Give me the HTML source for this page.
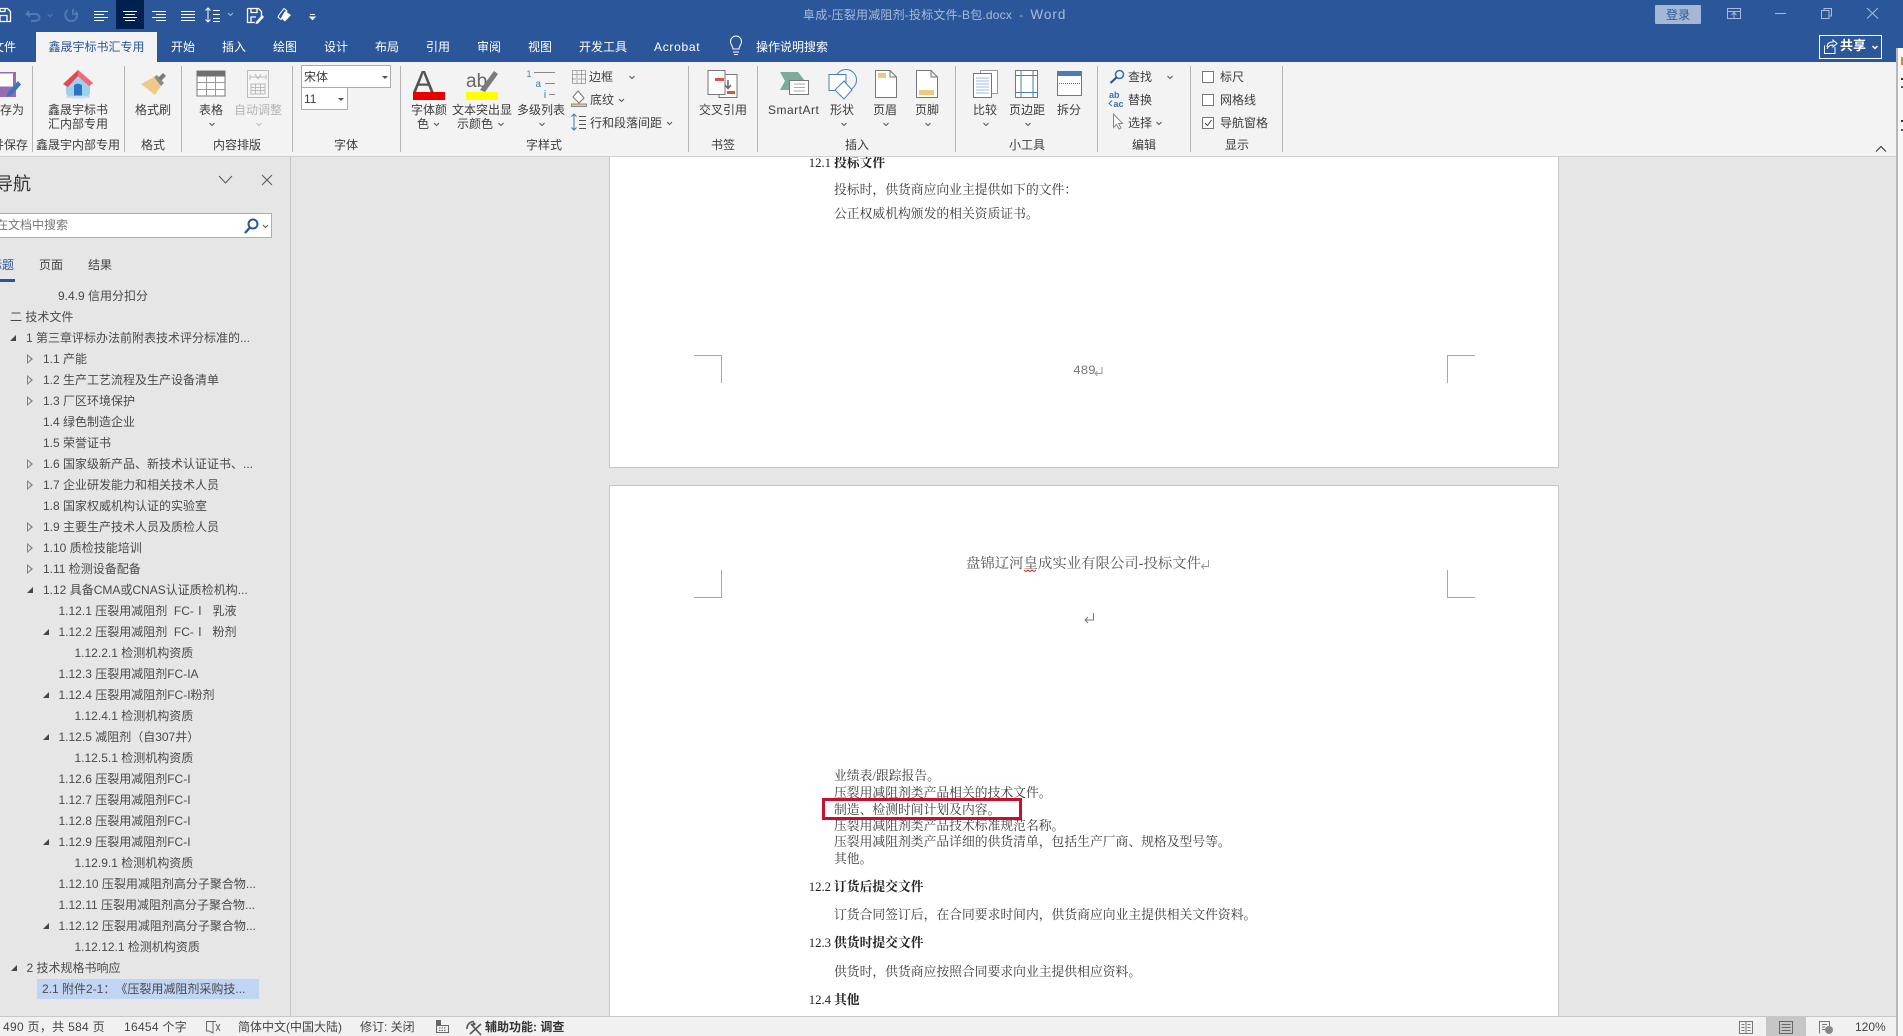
<!DOCTYPE html>
<html lang="zh-CN">
<head>
<meta charset="utf-8">
<title>阜成-压裂用减阻剂-投标文件-B包.docx - Word</title>
<style>
html,body{margin:0;padding:0;background:#fff}
#app{position:relative;width:1903px;height:1036px;overflow:hidden;background:#f8f8f8;font-family:"Liberation Sans","Noto Sans CJK SC",sans-serif;font-size:12px;color:#444;text-spacing-trim:space-all}
.b{position:absolute}
.t{position:absolute;white-space:nowrap;line-height:16px;height:16px}
.w{color:#fff}
.c{text-align:center}
.s{position:absolute;top:66px;height:86px;width:1px;background:#b4b4b4}
.dk{color:#3d3d3d}
#navlist{position:absolute;left:0;top:286px;width:289px}
.i{position:relative;height:21px;line-height:21px;white-space:nowrap;color:#4a4a4a}
.e::before{content:"";position:absolute;margin-left:-16px;top:7px;border-style:solid;border-width:0 0 6px 6px;border-color:transparent transparent #454545 transparent}
.r::before{content:"";position:absolute;margin-left:-16px;top:5px;width:6px;height:10px;background:#808080;clip-path:polygon(evenodd,0 0,100% 50%,0 100%,0 0,1px 2px,1px 8px,4px 5px,1px 2px)}
.d{position:absolute;white-space:nowrap;font-family:"Liberation Serif","Noto Serif CJK SC",serif;font-size:12.8px;line-height:16px;height:16px;color:#3a3a3a}
.h{font-weight:700;color:#222}
.h span{display:inline-block;width:25.3px;font-weight:400}
</style>
</head>
<body>
<div id="app">
<!-- window backgrounds -->
<div class="b" style="left:0;top:0;width:1903px;height:48px;background:#2b579a"></div>
<div class="b" style="left:0;top:48px;width:1897px;height:14px;background:#2b579a"></div>
<div class="b" style="left:0;top:62px;width:1896px;height:94px;background:#f3f3f3"></div>
<div class="b" style="left:0;top:156px;width:1896px;height:860px;background:#e6e6e6"></div>
<div class="b" style="left:0;top:156px;width:1896px;height:1px;background:#cfcfcf"></div>
<div class="b" style="left:1896px;top:48px;width:2px;height:988px;background:#b8b8b8"></div>
<div class="b" style="left:290px;top:157px;width:1px;height:859px;background:#c6c6c6"></div>
<div class="b" style="left:0;top:1016px;width:1896px;height:20px;background:#f1f1f1;border-top:1px solid #c8c8c8;box-sizing:border-box"></div>
<div class="b" style="left:1766px;top:1017px;width:40px;height:19px;background:#c6c6c6"></div>
<!-- behind-window slivers -->
<div class="b" style="left:1901px;top:57px;width:2px;height:8px;background:#c98a3c"></div>
<div class="b" style="left:1901px;top:78px;width:2px;height:2px;background:#333"></div>
<div class="b" style="left:1901px;top:86px;width:2px;height:2px;background:#555"></div>
<div class="b" style="left:1901px;top:120px;width:2px;height:2px;background:#333"></div>
<div class="b" style="left:1901px;top:129px;width:2px;height:2px;background:#555"></div>
<!-- Quick access highlight and active tab -->
<div class="b" style="left:116px;top:0;width:28px;height:29px;background:#002050"></div>
<div class="b" style="left:36px;top:32px;width:121px;height:30px;background:#f3f3f3"></div>
<!-- pages -->
<div class="b" style="left:609px;top:157px;width:950px;height:311px;background:#fff;border:1px solid #c6c6c6;border-top:0;box-sizing:border-box"></div>
<div class="b" style="left:609px;top:485px;width:950px;height:531px;background:#fff;border:1px solid #c6c6c6;border-bottom:0;box-sizing:border-box"></div>
<!-- separators -->
<div class="s" style="left:32px"></div><div class="s" style="left:124px"></div><div class="s" style="left:181px"></div><div class="s" style="left:292px"></div><div class="s" style="left:400px"></div><div class="s" style="left:688px"></div><div class="s" style="left:757px"></div><div class="s" style="left:955px"></div><div class="s" style="left:1097px"></div><div class="s" style="left:1190px"></div><div class="s" style="left:1282px"></div>

<svg class="b" style="left:0;top:0" width="1903" height="1036" viewBox="0 0 1903 1036" fill="none">
<!-- QAT -->
<g stroke="#fff" stroke-width="1.3">
<path d="M-5 8.5H7.5L10.5 11.5V21.5H-5zM0 21.5V15.5H7V21.5M0 8.5V11.5H5V8.5"/>
<path d="M94 11.5H108M94 14.5H104M94 17.5H108M94 20.5H104" stroke-width="1"/>
<path d="M123 11.5H137M125 14.5H135M123 17.5H137M125 20.5H135" stroke-width="1"/>
<path d="M152 11.5H166M156 14.5H166M152 17.5H166M156 20.5H166" stroke-width="1"/>
<path d="M181 11.5H195M181 14.5H195M181 17.5H195M181 20.5H195" stroke-width="1"/>
<path d="M208 8V22M205.5 10.5L208 8L210.5 10.5M205.5 19.5L208 22L210.5 19.5M213 10.5H220M213 14.5H220M213 18.5H220M213 21.5H220" stroke-width="1"/>
<path d="M247.5 8.5H258.5L261.5 11.5V17M247.5 8.5V22.5H255M251 8.5V12.5H257V8.5M251 22.5V17H256"/>
</g>
<path d="M256 22L262 15L264 17L258 23.5L255.5 24Z" fill="#fff"/>
<path d="M279 15L284 8.5L287 11L281 19.5L278 17Z" stroke="#fff"/>
<path d="M285 11L291 15L285 21.500L281 18Z" fill="#fff"/>
<path d="M310 14.5H315M310 17L312.5 19.5L315 17Z" stroke="#fff" fill="#fff" stroke-width="1"/>
<path d="M228 13l2.5 2.5 2.5-2.5" stroke="#a8bcd8"/>
<g stroke="#537ab3" stroke-width="2">
<path d="M29 11L26.5 14L30 16.5M27 14H35C41 14 41 21 35 21H31"/>
<path d="M68 10A6 6 0 1 0 76 11.5M73 9V14H78" stroke-width="1.8"/>
</g>
<path d="M47.5 14l2.5 2.5 2.5-2.5" stroke="#537ab3"/>
<!-- lightbulb -->
<path d="M733 52H739M734 54.5H738M733 49C733 46 730.5 45 730.5 41.500A5.5 5.5 0 0 1 741.5 41.500C741.5 45 739 46 739 49Z" stroke="#fff"/>
<!-- window controls -->
<g stroke="#a8bcd8">
<path d="M1727.5 8.5H1740.5V18.5H1727.5ZM1727.5 11.5H1740.5M1734 18V13M1731.5 15L1734 12.5L1736.5 15"/>
<path d="M1775 13.5H1786"/>
<path d="M1821.5 10.5H1829V18.5H1821.5ZM1824 10V8.5H1831.5V16H1829.5"/>
<path d="M1867 8L1878 18.5M1878 8L1867 18.5"/>
</g>
<!-- share -->
<rect x="1819.5" y="35.5" width="62" height="23" stroke="#fff"/>
<path d="M1824.5 45.5V53.5H1835V47M1827 47C1827 43 1830 42 1833 42V40L1837 43.5L1833 47V45C1830 45 1828 46 1827 49" stroke="#fff"/>
<path d="M1872.5 46l2.5 2.5 2.5-2.5" stroke="#fff" stroke-width="1.5"/>

<!-- save as -->
<rect x="-8" y="72" width="24" height="25" fill="#9a6bb5"/><rect x="-5" y="73.5" width="18" height="13" fill="#fff"/>
<path d="M18 81L8 92L6.5 97L11.5 95.5L21 84.5Z" fill="#3b78b5"/>
<!-- home icon -->
<path d="M67 87H89V97H67Z" fill="#a9d8ee"/><path d="M66 85V94C70 98 86 98 90 94V85L78 74Z" fill="#9fd1ea"/>
<path d="M74 96V86C74 83 82 83 82 86V96Z" fill="#2f74c0"/>
<path d="M63 84L78 70L93 83L89 86L78 76L68 87Z" fill="#e8454f"/><path d="M78 70L93 83L89 86L78 76Z" fill="#f26a70"/>
<ellipse cx="78" cy="97" rx="12" ry="1.5" fill="#c8dfe9"/>
<!-- brush -->
<path d="M141 84L154 77L161 86L155 95Z" fill="#efc987"/>
<path d="M154 77L157 75L164 83L161 86Z" fill="#8b8b8b"/>
<path d="M158 78L163 73L166 76L161 81Z" fill="#7a7a7a"/>
<!-- table -->
<rect x="197" y="71" width="28" height="25" fill="#fff" stroke="#7a7a7a"/><rect x="197" y="71" width="28" height="5.5" fill="#6f6f6f"/>
<path d="M197 82.5H225M197 89.5H225M206.5 76V96M215.5 76V96" stroke="#9a9a9a"/>
<!-- autofit -->
<rect x="247.5" y="70.5" width="21" height="27" fill="#f6f6f6" stroke="#bbb"/>
<path d="M250 77H266M255 74L258 79M261 74L258 79M250 74.5V79.5M266 74.5V79.5" stroke="#bbb"/>
<rect x="251" y="84" width="14" height="10" stroke="#bbb" fill="#f6f6f6"/><path d="M251 87.5H265M251 90.5H265M255.5 84V94M260.5 84V94" stroke="#bbb"/>
<!-- dropdown arrows -->
<path d="M381 75h5l-2.5 2.5z M337 99h5l-2.5 2.5z" fill="#555"/>
<!-- font colour -->
<text x="413" y="92" font-family="Liberation Sans" font-size="31" fill="#555">A</text>
<rect x="413" y="92" width="32" height="8" fill="#e60000"/>
<!-- highlight -->
<text x="466" y="87" font-family="Liberation Sans" font-size="19" fill="#666">ab</text>
<path d="M480 90L494 71L498 74L485 92Z" fill="#7b7b7b"/>
<rect x="466" y="92" width="32" height="8" fill="#ffff00"/>
<!-- multilevel -->
<text x="526.5" y="77" font-family="Liberation Sans" font-size="9" fill="#4a7ebb">1</text>
<path d="M534 72.5H555" stroke="#888"/>
<text x="535.5" y="87" font-family="Liberation Sans" font-size="10" fill="#4a7ebb">a</text>
<path d="M545 83.5H555" stroke="#888"/>
<path d="M545 92V98M545 90V91" stroke="#4a7ebb"/><path d="M549 94.5H555" stroke="#888"/>
<!-- borders -->
<path d="M572.5 70.5H585.5V83.5H572.5ZM572.5 74.5H585.5M572.5 79H585.5M577 70.5V83.5M581.5 70.5V83.5" stroke="#666" stroke-dasharray="1 1"/>
<!-- shading -->
<path d="M578 91L584 98L579 103L573 97Z" stroke="#777" fill="#fff"/><path d="M572 104.5H586V107H572Z" fill="#efc987"/><rect x="571.5" y="104" width="15" height="2.5" stroke="#888"/>
<!-- line spacing -->
<path d="M574 114V130M571.5 116.5L574 114L576.5 116.5M571.5 127.5L574 130L576.5 127.5" stroke="#3b78b5"/><path d="M579 116.5H586M579 120.5H586M579 124.5H586M579 128.5H586" stroke="#555"/>
<!-- cross-ref -->
<rect x="719" y="74.5" width="18" height="23" fill="#fff" stroke="#777"/>
<rect x="708" y="70.5" width="17" height="24" fill="#fff" stroke="#777"/>
<rect x="715" y="78" width="9" height="3" fill="#d9573a"/><rect x="727" y="91" width="8" height="3" fill="#d9573a"/>
<path d="M728 80V89M725 85L728 88.5L731 85" stroke="#666" stroke-width="1.5"/>
<!-- SmartArt -->
<path d="M780 72H798L805 81L798 90H780L785 81Z" fill="#7aab9b"/>
<rect x="789.5" y="80.5" width="19" height="14" fill="#fff" stroke="#777"/>
<path d="M794 84H805M794 87.5H805M794 91H805" stroke="#aaa"/>
<!-- shapes -->
<circle cx="846" cy="80" r="10.5" stroke="#4a7ebb" fill="#f3f3f3"/>
<rect x="829" y="74.5" width="17" height="16" fill="#fff" stroke="#4a7ebb"/>
<path d="M844 81L852 90L844 99L835 90Z" fill="#fff" stroke="#4a7ebb"/>
<!-- header/footer -->
<path d="M875.5 70.5H890L896.5 77V97.5H875.5ZM890 70.5V77H896.5" fill="#fff" stroke="#777"/><rect x="878" y="73" width="8" height="5" fill="#efc97e"/>
<path d="M916.5 70.5H931L937.5 77V97.5H916.5ZM931 70.5V77H937.5" fill="#fff" stroke="#777"/><rect x="919" y="90" width="15" height="5" fill="#efc97e"/>
<!-- compare -->
<rect x="980.5" y="70.5" width="17" height="23" fill="#fff" stroke="#999"/>
<rect x="973.5" y="73.5" width="18" height="24" fill="#fff" stroke="#4a7ebb"/>
<path d="M976 78H989M976 81H989M976 84H989M976 87H989M976 90H989M976 93H989" stroke="#9dbce0"/>
<!-- margins -->
<rect x="1015.5" y="70.5" width="22" height="27" fill="#fff" stroke="#777"/>
<path d="M1021 70.5V97.5M1033 70.5V97.5M1015.5 75.5H1037.5M1015.5 92.5H1037.5" stroke="#4a7ebb"/>
<!-- split -->
<rect x="1057.5" y="71.5" width="24" height="24" fill="#fff" stroke="#777"/><rect x="1057" y="71" width="25" height="5" fill="#4a7ebb"/>
<path d="M1059 83.5H1080" stroke="#4a7ebb" stroke-dasharray="1 1"/>
<!-- find -->
<circle cx="1119.5" cy="74.5" r="4" stroke="#3b6fb0" stroke-width="1.6"/><path d="M1116.5 77.5L1110.5 83" stroke="#2b579a" stroke-width="2.2"/>
<!-- replace -->
<text x="1109" y="98" font-family="Liberation Sans" font-size="9" font-weight="700" fill="#3b6fb0">ab</text>
<text x="1113.5" y="107" font-family="Liberation Sans" font-size="9" font-weight="700" fill="#3b6fb0">ac</text>
<path d="M1112 100.5L1109 103.5L1112 106" stroke="#3b6fb0"/>
<!-- select -->
<path d="M1113.5 114V127.5L1116.5 124.5L1119 129L1121 128L1118.5 123.5H1122.5Z" fill="#fff" stroke="#888"/>
<!-- checkboxes -->
<rect x="1202.5" y="71.5" width="11" height="11" fill="#fff" stroke="#777"/>
<rect x="1202.5" y="94.5" width="11" height="11" fill="#fff" stroke="#777"/>
<rect x="1202.5" y="117.5" width="11" height="11" fill="#fff" stroke="#777"/>
<path d="M1205 123L1207.5 125.5L1211.5 120" stroke="#444"/>
<!-- chevrons -->
<g stroke="#555">
<path d="M209.5 123l2.5 2.5 2.5-2.5M434 123l2.5 2.5 2.5-2.5M498.5 123l2.5 2.5 2.5-2.5M539.5 123l2.5 2.5 2.5-2.5M629.5 76l2.5 2.5 2.5-2.5M619 99l2.5 2.5 2.5-2.5M667 122l2.5 2.5 2.5-2.5"/>
<path d="M841.5 123l2.5 2.5 2.5-2.5M883.5 123l2.5 2.5 2.5-2.5M925.5 123l2.5 2.5 2.5-2.5M983.5 123l2.5 2.5 2.5-2.5M1025.5 123l2.5 2.5 2.5-2.5M1167.5 76l2.5 2.5 2.5-2.5M1156.5 122l2.5 2.5 2.5-2.5"/>
<path d="M1876 151.5l5-5 5 5" stroke="#333" stroke-width="1.1"/>
</g>
<path d="M256.5 123l2.5 2.5 2.5-2.5" stroke="#bbb"/>
<!-- Nav icons -->
<path d="M219 176L225.5 183L232 176M262 175L272 185M272 175L262 185" stroke="#555"/>
<!-- status icons -->
<g stroke="#666">
<path d="M206.5 1021.5H213V1033L209 1031H206.5ZM213 1021.5H216M216 1024L220 1031M220 1024L216 1031"/>
<path d="M436.5 1025.5H448.5V1032.5H436.5Z"/>
<path d="M439 1028H446M439 1030.500H446" stroke-dasharray="1.500 1"/>
</g>
<rect x="436" y="1020" width="5" height="5" fill="#666"/>
<path d="M467 1029A7 7 0 0 1 474 1021.5M470 1034L481 1024M471 1024L481 1035" stroke="#555" stroke-width="1.6"/>
<circle cx="474" cy="1024" r="1.5" fill="#555"/>
<g stroke="#777">
<path d="M1739.5 1021.5H1745.5L1746 1022.5L1746.5 1021.5H1752.5V1033.5H1739.5ZM1746 1022V1034M1741.5 1024.5H1744.5M1741.5 1027.5H1744.5M1741.5 1030.5H1744.5M1747.5 1024.5H1750.5M1747.5 1027.5H1750.5M1747.5 1030.5H1750.5"/>
<rect x="1779.5" y="1021.5" width="13" height="12" stroke="#666"/><path d="M1781.5 1024.5H1790.5M1781.5 1027.5H1790.5M1781.5 1030.5H1790.5" stroke="#666"/>
<path d="M1819.5 1033.5V1021.5H1829.5V1026M1822 1024.5H1827M1822 1027H1825M1822 1029.5H1825"/>
</g>
<circle cx="1829" cy="1030" r="4" fill="#888"/>
<!-- crop marks -->
<g stroke="#a8a8a8">
<path d="M694 355.5H721.5V383M1475 355.5H1447.5V383"/>
<path d="M694 597.5H721.5V570M1475 597.5H1447.5V570"/>
</g>
<!-- return marks -->
<g stroke="#999">
<path d="M1102 367V373.5H1095M1097.5 371L1095 373.5L1097.5 376"/>
<path d="M1208.5 560V566.5H1201.5M1204 564L1201.5 566.5L1204 569"/>
<path d="M1093.5 613V620H1085M1088 617L1085 620L1088 623" stroke="#777"/>
</g>
<path d="M1024 570l2 1.5 2-1.5 2 1.5 2-1.5 2 1.5 2-1.5" stroke="#e02020"/>
<!-- red annotation -->
<rect x="823.5" y="799.5" width="197" height="19" stroke="#c8102e" stroke-width="3"/>
</svg>

<!-- Title bar -->
<div class="t c" style="left:1655px;top:5px;width:46px;height:19px;background:#a4b8d6;color:#2b579a;line-height:20px;border-radius:1px">登录</div>
<div class="t" style="left:803px;top:7px;color:#a8bcd8;letter-spacing:.2px">阜成-压裂用减阻剂-投标文件-B包.docx&nbsp; - &nbsp;<span style="font-size:13.5px;letter-spacing:1px">Word</span></div>
<!-- Tabs -->
<div class="t w" style="left:-8px;top:39px">文件</div>
<div class="t c" style="left:36px;top:39px;width:121px;color:#2b579a">鑫晟宇标书汇专用</div>
<div class="t w" style="left:171px;top:39px">开始</div>
<div class="t w" style="left:222px;top:39px">插入</div>
<div class="t w" style="left:273px;top:39px">绘图</div>
<div class="t w" style="left:324px;top:39px">设计</div>
<div class="t w" style="left:375px;top:39px">布局</div>
<div class="t w" style="left:426px;top:39px">引用</div>
<div class="t w" style="left:477px;top:39px">审阅</div>
<div class="t w" style="left:528px;top:39px">视图</div>
<div class="t w" style="left:579px;top:39px">开发工具</div>
<div class="t w" style="left:654px;top:39px;letter-spacing:.7px">Acrobat</div>
<div class="t w" style="left:756px;top:39px">操作说明搜索</div>
<div class="t w" style="left:1840px;top:38px;font-weight:700;font-size:13px">共享</div>

<!-- Ribbon labels -->
<div class="t dk" style="left:-12px;top:102px">另存为</div>
<div class="t dk" style="left:-8px;top:137px">并保存</div>
<div class="t dk c" style="left:38px;top:102px;width:80px">鑫晟宇标书</div>
<div class="t dk c" style="left:38px;top:116px;width:80px">汇内部专用</div>
<div class="t dk" style="left:36px;top:137px">鑫晟宇内部专用</div>
<div class="t dk" style="left:135px;top:102px">格式刷</div>
<div class="t dk" style="left:141px;top:137px">格式</div>
<div class="t dk" style="left:199px;top:102px">表格</div>
<div class="t" style="left:234px;top:102px;color:#b4b4b4">自动调整</div>
<div class="t dk" style="left:213px;top:137px">内容排版</div>
<div class="b" style="left:301px;top:65px;width:90px;height:23px;background:#fff;border:1px solid #ababab;box-sizing:border-box"></div>
<div class="b" style="left:301px;top:87px;width:47px;height:23px;background:#fff;border:1px solid #ababab;box-sizing:border-box"></div>
<div class="t dk" style="left:304px;top:69px">宋体</div>
<div class="t dk" style="left:304px;top:91px">11</div>
<svg class="b" style="left:301px;top:65px" width="90" height="45"><path d="M81 11h6l-3 3zM37 33h6l-3 3z" fill="#555"/></svg>
<div class="t dk" style="left:334px;top:137px">字体</div>
<div class="t dk" style="left:411px;top:102px">字体颜</div>
<div class="t dk" style="left:417px;top:116px">色</div>
<div class="t dk" style="left:452px;top:102px">文本突出显</div>
<div class="t dk" style="left:457px;top:116px">示颜色</div>
<div class="t dk" style="left:517px;top:102px">多级列表</div>
<div class="t dk" style="left:589px;top:69px">边框</div>
<div class="t dk" style="left:590px;top:92px">底纹</div>
<div class="t dk" style="left:590px;top:115px">行和段落间距</div>
<div class="t dk" style="left:526px;top:137px">字样式</div>
<div class="t dk" style="left:699px;top:102px">交叉引用</div>
<div class="t dk" style="left:711px;top:137px">书签</div>
<div class="t dk" style="left:768px;top:102px;letter-spacing:.5px">SmartArt</div>
<div class="t dk" style="left:830px;top:102px">形状</div>
<div class="t dk" style="left:873px;top:102px">页眉</div>
<div class="t dk" style="left:915px;top:102px">页脚</div>
<div class="t dk" style="left:845px;top:137px">插入</div>
<div class="t dk" style="left:973px;top:102px">比较</div>
<div class="t dk" style="left:1009px;top:102px">页边距</div>
<div class="t dk" style="left:1057px;top:102px">拆分</div>
<div class="t dk" style="left:1009px;top:137px">小工具</div>
<div class="t dk" style="left:1128px;top:69px">查找</div>
<div class="t dk" style="left:1128px;top:92px">替换</div>
<div class="t dk" style="left:1128px;top:115px">选择</div>
<div class="t dk" style="left:1132px;top:137px">编辑</div>
<div class="t dk" style="left:1220px;top:69px">标尺</div>
<div class="t dk" style="left:1220px;top:92px">网格线</div>
<div class="t dk" style="left:1220px;top:115px">导航窗格</div>
<div class="t dk" style="left:1225px;top:137px">显示</div>

<!-- Navigation pane -->
<div class="t" style="left:-5px;top:173px;font-size:18px;line-height:22px;height:22px;color:#333">导航</div>
<div class="b" style="left:-2px;top:213px;width:274px;height:25px;background:#fff;border:1px solid #adadad;box-sizing:border-box"></div>
<div class="t" style="left:-4px;top:217px;color:#777">在文档中搜索</div>
<svg class="b" style="left:240px;top:215px" width="32" height="22" fill="none"><circle cx="13" cy="9" r="4.5" stroke="#2b579a" stroke-width="2"/><path d="M9.5 13L5 18" stroke="#2b579a" stroke-width="2.4"/><path d="M23 10l2.5 2.5 2.5-2.5" stroke="#555"/></svg>
<div class="t" style="left:-10px;top:257px;color:#2b579a">标题</div>
<div class="b" style="left:0;top:279px;width:15px;height:3px;background:#2b579a"></div>
<div class="t" style="left:39px;top:257px;color:#444">页面</div>
<div class="t" style="left:88px;top:257px;color:#444">结果</div>
<div class="b" style="left:37px;top:979px;width:222px;height:20px;background:#c0d5f3"></div>
<div id="navlist">
<div class="i" style="padding-left:58px">9.4.9 信用分扣分</div>
<div class="i" style="padding-left:10px">二 技术文件</div>
<div class="i e" style="padding-left:26px">1 第三章评标办法前附表技术评分标准的...</div>
<div class="i r" style="padding-left:43px">1.1 产能</div>
<div class="i r" style="padding-left:43px">1.2 生产工艺流程及生产设备清单</div>
<div class="i r" style="padding-left:43px">1.3 厂区环境保护</div>
<div class="i" style="padding-left:43px">1.4 绿色制造企业</div>
<div class="i" style="padding-left:43px">1.5 荣誉证书</div>
<div class="i r" style="padding-left:43px">1.6 国家级新产品、新技术认证证书、...</div>
<div class="i r" style="padding-left:43px">1.7 企业研发能力和相关技术人员</div>
<div class="i" style="padding-left:43px">1.8 国家权威机构认证的实验室</div>
<div class="i r" style="padding-left:43px">1.9 主要生产技术人员及质检人员</div>
<div class="i r" style="padding-left:43px">1.10 质检技能培训</div>
<div class="i r" style="padding-left:43px">1.11 检测设备配备</div>
<div class="i e" style="padding-left:43px">1.12 具备CMA或CNAS认证质检机构...</div>
<div class="i" style="padding-left:58.5px">1.12.1 压裂用减阻剂&nbsp; FC-Ⅰ&nbsp; 乳液</div>
<div class="i e" style="padding-left:58.5px">1.12.2 压裂用减阻剂&nbsp; FC-Ⅰ&nbsp; 粉剂</div>
<div class="i" style="padding-left:74.5px">1.12.2.1 检测机构资质</div>
<div class="i" style="padding-left:58.5px">1.12.3 压裂用减阻剂FC-IA</div>
<div class="i e" style="padding-left:58.5px">1.12.4 压裂用减阻剂FC-I粉剂</div>
<div class="i" style="padding-left:74.5px">1.12.4.1 检测机构资质</div>
<div class="i e" style="padding-left:58.5px">1.12.5 减阻剂（自307井）</div>
<div class="i" style="padding-left:74.5px">1.12.5.1 检测机构资质</div>
<div class="i" style="padding-left:58.5px">1.12.6 压裂用减阻剂FC-I</div>
<div class="i" style="padding-left:58.5px">1.12.7 压裂用减阻剂FC-I</div>
<div class="i" style="padding-left:58.5px">1.12.8 压裂用减阻剂FC-I</div>
<div class="i e" style="padding-left:58.5px">1.12.9 压裂用减阻剂FC-I</div>
<div class="i" style="padding-left:74.5px">1.12.9.1 检测机构资质</div>
<div class="i" style="padding-left:58.5px">1.12.10 压裂用减阻剂高分子聚合物...</div>
<div class="i" style="padding-left:58.5px">1.12.11 压裂用减阻剂高分子聚合物...</div>
<div class="i e" style="padding-left:58.5px">1.12.12 压裂用减阻剂高分子聚合物...</div>
<div class="i" style="padding-left:74.5px">1.12.12.1 检测机构资质</div>
<div class="i e" style="padding-left:26.5px">2 技术规格书响应</div>
<div class="i" style="padding-left:42px">2.1 附件2-1：《压裂用减阻剂采购技...</div>
</div>

<!-- Status bar -->
<div class="t" style="left:3px;top:1019px;color:#444;letter-spacing:.3px">490 页，共 584 页</div>
<div class="t" style="left:124px;top:1019px;color:#444;letter-spacing:.3px">16454 个字</div>
<div class="t" style="left:238px;top:1019px;color:#444">简体中文(中国大陆)</div>
<div class="t" style="left:360px;top:1019px;color:#444">修订: 关闭</div>
<div class="t" style="left:485px;top:1019px;color:#333;font-weight:700">辅助功能: 调查</div>
<div class="t" style="left:1855px;top:1019px;color:#444">120%</div>

<!-- Document -->
<div class="d h" style="left:808.7px;top:155px;clip-path:inset(2px 0 0 0)"><span>12.1</span>投标文件</div>
<div class="d" style="left:834px;top:182px">投标时，供货商应向业主提供如下的文件：</div>
<div class="d" style="left:834px;top:206px">公正权威机构颁发的相关资质证书。</div>
<div class="t" style="left:1073px;top:363px;font-family:'Liberation Mono',monospace;color:#777;font-size:13px;letter-spacing:-.3px">489</div>
<div class="d" style="left:966px;top:556px;font-size:14.4px;color:#555">盘锦辽河皇成实业有限公司-投标文件</div>
<div class="d" style="left:834px;top:768px">业绩表/跟踪报告。</div>
<div class="d" style="left:834px;top:785px">压裂用减阻剂类产品相关的技术文件。</div>
<div class="d" style="left:834px;top:802px">制造、检测时间计划及内容。</div>
<div class="d" style="left:834px;top:818px">压裂用减阻剂类产品技术标准规范名称。</div>
<div class="d" style="left:834px;top:834px">压裂用减阻剂类产品详细的供货清单，包括生产厂商、规格及型号等。</div>
<div class="d" style="left:834px;top:851px">其他。</div>
<div class="d h" style="left:808.7px;top:879px"><span>12.2</span>订货后提交文件</div>
<div class="d" style="left:834px;top:907px">订货合同签订后，在合同要求时间内，供货商应向业主提供相关文件资料。</div>
<div class="d h" style="left:808.7px;top:935px"><span>12.3</span>供货时提交文件</div>
<div class="d" style="left:834px;top:964px">供货时，供货商应按照合同要求向业主提供相应资料。</div>
<div class="d h" style="left:808.7px;top:992px"><span>12.4</span>其他</div>
</div>
</body>
</html>
